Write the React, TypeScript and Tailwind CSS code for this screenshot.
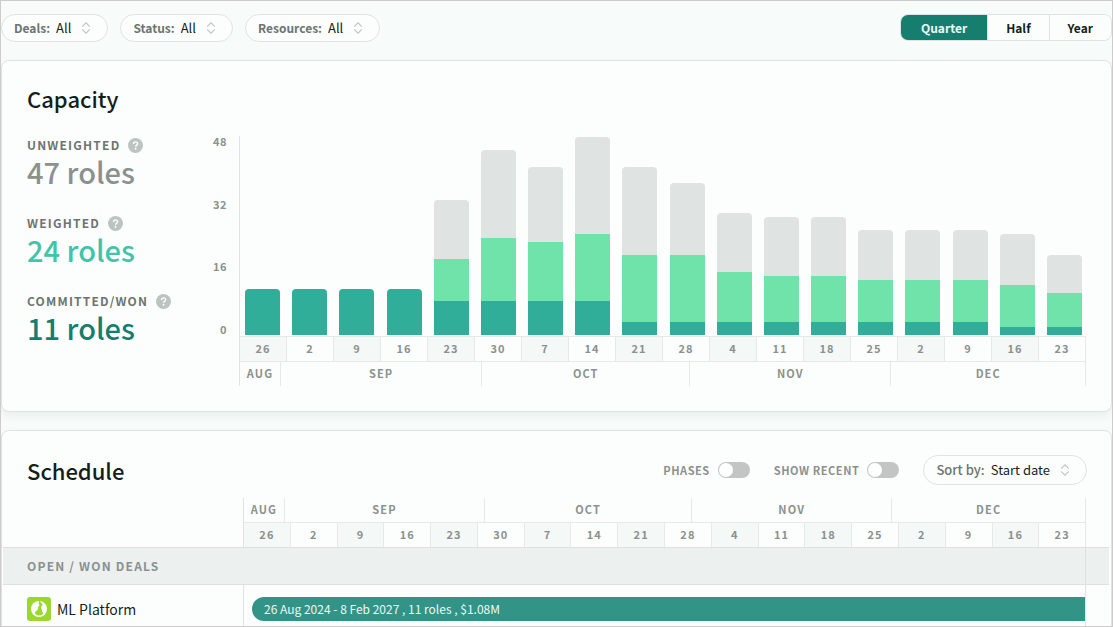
import { useState, type ReactNode } from "react";

const weeks = ["26", "2", "9", "16", "23", "30", "7", "14", "21", "28", "4", "11", "18", "25", "2", "9", "16", "23"];

/* [unweighted, weighted, committed] roles per week */
const capacity: [number, number, number][] = [
  [11, 11, 11], [11, 11, 11], [11, 11, 11], [11, 11, 11], [32, 18, 8], [44, 23, 8],
  [40, 22, 8], [47, 24, 8], [40, 19, 3], [36, 19, 3], [29, 15, 3], [28, 14, 3],
  [28, 14, 3], [25, 13, 3], [25, 13, 3], [25, 13, 3], [24, 12, 2], [19, 10, 2],
];

const PX_PER_ROLE = 4.21;

/* Month widths follow the number of visible days. */
const months = [
  { name: "AUG", grow: "grow-[6]" },
  { name: "SEP", grow: "grow-[30]" },
  { name: "OCT", grow: "grow-[31]" },
  { name: "NOV", grow: "grow-[30]" },
  { name: "DEC", grow: "grow-[29]" },
];

function Chevrons() {
  return (
    <svg className="pointer-events-none ml-2.5 h-3 w-2.5 shrink-0" viewBox="0 0 10 12" fill="none" stroke="#bcc3c1" strokeWidth="1.1" aria-hidden="true">
      <path d="M1.2 4.6 5 .8l3.8 3.8M1.2 7.4 5 11.2l3.8-3.8" />
    </svg>
  );
}

function Picker({ label, options, className, labelClass }: { label: string; options: string[]; className: string; labelClass: string }) {
  return (
    <label className={`flex items-center rounded-full border border-[#e0e3e2] bg-[#fcfefd] pr-4 pl-3 leading-5 ${className}`}>
      <span className={`text-[#6d7472] ${labelClass}`}>{label}:</span>
      <select className="field-sizing-content cursor-pointer appearance-none bg-transparent pl-1.5 text-[#141f1c] outline-none">
        {options.map((o) => (
          <option key={o}>{o}</option>
        ))}
      </select>
      <Chevrons />
    </label>
  );
}

function Metric({ label, value, color }: { label: string; value: string; color: string }) {
  return (
    <div>
      <div className="flex h-4 items-center gap-2">
        <span className="text-xs font-bold tracking-widest text-[#6d7472]">{label}</span>
        <button aria-label={`About ${label.toLowerCase()}`} className="h-[15px] w-[15px]">
          <svg viewBox="0 0 15 15" className="h-full w-full" aria-hidden="true">
            <circle cx="7.5" cy="7.5" r="7.5" fill="#bcc4c2" />
            <path d="M5.5 5.9c0-1.2.9-2 2.1-2s2 .7 2 1.8c0 1.4-1.9 1.5-1.9 3" fill="none" stroke="#fff" strokeWidth="1.4" />
            <circle cx="7.6" cy="10.8" r=".95" fill="#fff" />
          </svg>
        </button>
      </div>
      <div className={`text-[29px] leading-9 font-medium ${color}`}>{value}</div>
    </div>
  );
}

function Weeks() {
  return (
    <div className="flex">
      {weeks.map((w, i) => (
        <div key={i} className="flex h-6 flex-1 items-center justify-center border-r border-[#e6e9e8] pb-0.5 text-[11px] font-bold tracking-widest text-[#8b918f] odd:bg-[#f4f8f7]">
          {w}
        </div>
      ))}
    </div>
  );
}

function Months() {
  return (
    <div className="flex">
      {months.map((m) => (
        <div key={m.name} className={`flex h-6 w-0 items-center justify-center border-r border-[#e6e9e8] pb-0.5 ${m.grow}`}>
          <span className="text-[11px] leading-5 font-bold tracking-widest text-[#8b918f]">{m.name}</span>
        </div>
      ))}
    </div>
  );
}

function CapacityChart() {
  return (
    <div className="flex flex-1">
      <div className="flex h-[198px] w-8 flex-col justify-between text-right text-[11px] leading-[10px] font-bold tracking-wider text-[#8b918f]">
        <span>48</span>
        <span>32</span>
        <span>16</span>
        <span>0</span>
      </div>
      <div className="ml-3 flex-1 border-l border-[#e0e3e2]">
        <div className="flex h-[199px] items-end justify-between pr-1 pl-[5px]">
          {capacity.map(([all, weighted, won], i) => (
            <div key={i} className="flex w-[35px] flex-col overflow-hidden rounded-t">
              <div className="bg-[#dfe3e2]" style={{ height: (all - weighted) * PX_PER_ROLE }} />
              <div className="bg-[#70e3ab]" style={{ height: (weighted - won) * PX_PER_ROLE }} />
              <div className="bg-[#30ae99]" style={{ height: won * PX_PER_ROLE }} />
            </div>
          ))}
        </div>
        <div className="mt-px border-y border-[#e6e9e8]">
          <Weeks />
        </div>
        <Months />
      </div>
    </div>
  );
}

function Toggle({ label }: { label: string }) {
  return (
    <label className="flex cursor-pointer items-center gap-2">
      <span className="text-[11px] leading-4 font-bold tracking-wider text-[#8b918f]">{label}</span>
      <span className="flex">
        <input type="checkbox" role="switch" className="peer sr-only" />
        <span className="flex h-4 w-8 items-center rounded-full bg-[#c1c6c4] p-px peer-checked:justify-end peer-checked:bg-[#167e6e]">
          <span className="h-3.5 w-3.5 rounded-full bg-white" />
        </span>
      </span>
    </label>
  );
}

function DealLogo() {
  return (
    <svg className="h-6 w-6 shrink-0" viewBox="0 0 24 24" aria-hidden="true">
      <rect width="24" height="24" rx="3" fill="#9bd82d" />
      <circle cx="12" cy="12" r="8" fill="#fff" />
      <path d="M12.4 3.6 11.6 6.6l.9 1.4-1.7 2.8v1.7L8 15.200l.2 1.900 2.600 1.300 3.400-.1 2-1.900-1-1.900-.6-2.500-.6-2.200 1.700-1.900-1.500-2.100z" fill="#9bd82d" />
    </svg>
  );
}

function Card({ children, className }: { children: ReactNode; className: string }) {
  return (
    <section className={`rounded-lg border border-[#dfe3e2] bg-[#fcfefd] shadow-[0_4px_10px_rgba(20,50,40,0.06)] ${className}`}>
      {children}
    </section>
  );
}

export default function App() {
  const [range, setRange] = useState("Quarter");
  return (
    <main className="h-screen overflow-hidden border border-[#cbcccb] bg-[#f7fbfa] font-['Noto_Sans_CJK_SC',sans-serif] text-[13px] text-[#141f1c]">
      <header className="flex h-[41px] items-start justify-between pt-[13px]">
        <div className="flex gap-3">
          <Picker label="Deals" options={["All", "Open", "Won"]} className="h-7" labelClass="text-xs font-bold" />
          <Picker label="Status" options={["All", "Active", "Closed"]} className="h-7" labelClass="text-xs font-bold" />
          <Picker label="Resources" options={["All", "Assigned", "Open"]} className="h-7" labelClass="text-xs font-bold" />
        </div>
        <div className="flex h-[27px] overflow-hidden rounded-lg border border-[#dfe3e2]">
          {["Quarter", "Half", "Year"].map((r) => (
            <button
              key={r}
              aria-pressed={range === r}
              onClick={() => setRange(r)}
              className={`cursor-pointer border-r border-[#dfe3e2] px-[18px] text-xs font-bold first:px-5 last:border-r-0 ${range === r ? "bg-[#167e6e] text-[#eafaf6]" : "bg-[#fcfefd]"}`}
            >
              {r}
            </button>
          ))}
        </div>
      </header>

      <Card className="mt-[18px] px-[25px] pb-[25px]">
        <h2 className="pt-[21px] text-[22px] leading-8 font-medium">Capacity</h2>
        <div className="mt-[22px] flex">
          <div className="flex w-[168px] flex-col gap-[26px] pt-px">
            <Metric label="UNWEIGHTED" value="47 roles" color="text-[#8b918f]" />
            <Metric label="WEIGHTED" value="24 roles" color="text-[#40c4aa]" />
            <Metric label="COMMITTED/WON" value="11 roles" color="text-[#167e6e]" />
          </div>
          <CapacityChart />
        </div>
      </Card>

      <Card className="mt-[18px]">
        <div className="flex items-center pt-[23px] pr-6 pl-[25px]">
          <h2 className="flex-1 text-[22px] leading-8 font-medium">Schedule</h2>
          <div className="flex items-center gap-6">
            <Toggle label="PHASES" />
            <Toggle label="SHOW RECENT" />
            <Picker label="Sort by" options={["Start date", "End date", "Name"]} className="h-[30px]" labelClass="font-medium" />
          </div>
        </div>
        <div className="mt-3 mr-[25px] ml-[241px] border-l border-[#e0e3e2]">
          <Months />
          <div className="border-t border-[#e6e9e8]">
            <Weeks />
          </div>
        </div>
        <div className="mr-0.5 ml-px flex border-y border-[#dde1df] bg-[#ecf0ef]">
          <h3 className="flex-1 py-2 pl-6 text-xs leading-5 font-bold tracking-widest text-[#8b918f]">OPEN / WON DEALS</h3>
          <div className="w-6 border-l border-[#dde1df]" />
        </div>
        <div className="flex">
          <div className="flex h-14 w-[241px] items-start gap-1.5 pt-3 pl-[25px]">
            <DealLogo />
            <span className="text-sm leading-6">ML Platform</span>
          </div>
          <div className="mr-[25px] flex-1 border-x border-[#e0e3e2] pt-3 pl-2">
            <div className="h-6 rounded-l-full bg-[#329387] pl-3 text-xs leading-6 text-[#eafaf6]">26 Aug 2024 - 8 Feb 2027 , 11 roles , $1.08M</div>
          </div>
        </div>
      </Card>
    </main>
  );
}
